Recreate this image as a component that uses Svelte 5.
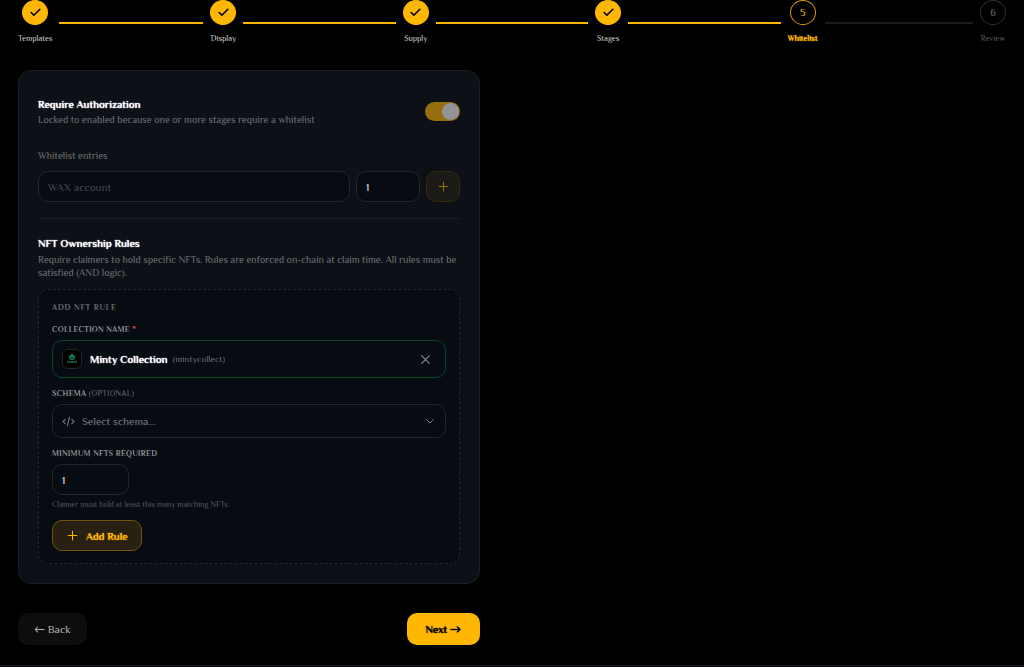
<script>
    const steps = ['Templates', 'Display', 'Supply', 'Stages', 'Whitelist', 'Review'];
    const current = 4;

    let authorized = true;
    let account = '';
    let amount = 1;
    let collection = { name: 'Minty Collection', id: 'mintycollect' };
    let schema = '';
    let minimum = 1;
</script>

<div class="page">
    <ol class="stepper">
        {#each steps as step, i}
            <li class:done={i < current} class:active={i === current}>
                <div class="step">
                    <span class="circle">
                        {#if i < current}
                            <svg width="13" height="13" viewBox="0 0 24 24" aria-hidden="true">
                                <path d="M20 6 9 17l-5-5" />
                            </svg>
                        {:else}
                            {i + 1}
                        {/if}
                    </span>
                    <span class="step-label">{step}</span>
                </div>
                {#if i < steps.length - 1}
                    <span class="line"></span>
                {/if}
            </li>
        {/each}
    </ol>

    <div class="columns">
        <main>
            <section class="card">
                <div class="auth">
                    <label for="auth">
                        <span class="title">Require Authorization</span>
                        <span class="subtitle">Locked to enabled because one or more stages require a whitelist</span>
                    </label>
                    <input id="auth" class="toggle" type="checkbox" bind:checked={authorized} disabled />
                </div>

                <label class="entries-label" for="account">Whitelist entries</label>
                <div class="entries">
                    <input id="account" class="field account" type="text" placeholder="WAX account" bind:value={account} />
                    <input class="field amount" type="number" min="1" aria-label="Amount" bind:value={amount} />
                    <button class="add-entry" type="button" aria-label="Add entry" disabled>
                        <svg width="13" height="13" viewBox="0 0 24 24" aria-hidden="true"><path d="M12 4v16M4 12h16" /></svg>
                    </button>
                </div>

                <div class="rules">
                    <h2 class="title">NFT Ownership Rules</h2>
                    <p class="desc">Require claimers to hold specific NFTs. Rules are enforced on-chain at claim time. All rules must be satisfied (AND logic).</p>

                    <div class="rule-form">
                        <h3>ADD NFT RULE</h3>

                        <div class="group">
                            <span class="caption">COLLECTION NAME <b>*</b></span>
                            <div class="box collection">
                                <span class="logo">
                                    <svg width="12" height="12" viewBox="0 0 24 24" aria-hidden="true">
                                        <path class="leaf" d="M12 2l5 3 1 5-3 4H9l-3-4 1-5z" />
                                        <path class="vein" d="M8 5l4 3 4-3M12 8v5M8 10l4 2 4-2" />
                                        <path class="word" d="M2 18h3M6 18h3M10 18h4M15 18h3M19 18h3" />
                                    </svg>
                                </span>
                                <span class="name">{collection.name}</span>
                                <span class="id">({collection.id})</span>
                                <button class="clear" type="button" aria-label="Clear collection">
                                    <svg width="13" height="13" viewBox="0 0 24 24" aria-hidden="true"><path d="M19 5 5 19M5 5l14 14" /></svg>
                                </button>
                            </div>
                        </div>

                        <div class="group">
                            <label class="caption" for="schema">SCHEMA <i>(OPTIONAL)</i></label>
                            <div class="box schema">
                                <svg width="13" height="13" viewBox="0 0 24 24" aria-hidden="true">
                                    <path d="M6 8l-4 4 4 4M18 8l4 4-4 4M14 4l-4 16" />
                                </svg>
                                <select id="schema" bind:value={schema}>
                                    <option value="">Select schema...</option>
                                </select>
                                <svg width="12" height="12" viewBox="0 0 24 24" aria-hidden="true"><path d="M5 9l7 7 7-7" /></svg>
                            </div>
                        </div>

                        <div class="group">
                            <label class="caption" for="minimum">MINIMUM NFTS REQUIRED</label>
                            <input id="minimum" class="field minimum" type="number" min="1" bind:value={minimum} />
                            <p class="hint">Claimer must hold at least this many matching NFTs</p>
                        </div>

                        <button class="add-rule" type="button">
                            <svg width="13" height="13" viewBox="0 0 24 24" aria-hidden="true"><path d="M12 4v16M4 12h16" /></svg>
                            Add Rule
                        </button>
                    </div>
                </div>
            </section>

            <nav class="actions">
                <button class="back" type="button">← Back</button>
                <button class="next" type="button">Next →</button>
            </nav>
        </main>
    </div>
</div>
<footer></footer>

<style>
    :global(body) {
        margin: 0;
        background: #000;
        overflow: hidden;
    }

    .page, .page input, .page button, .page select {
        box-sizing: border-box;
        font-family: Philosopher, Lato, "Liberation Sans", sans-serif;
    }

    .page {
        padding: 0 18px 20px;
        color: #fff;
        font-size: 11px;
    }

    svg {
        display: block;
        flex: none;
        fill: none;
        stroke: currentColor;
        stroke-width: 2;
        stroke-linecap: round;
        stroke-linejoin: round;
    }

    h2, h3, p {
        margin: 0;
    }

    button {
        cursor: pointer;
    }

    /* regular cut, thickened */
    .title, .name, .add-rule, .next, .active .step-label {
        font-weight: 400;
        text-shadow: 0 0 1px currentColor, 0 0 1px currentColor;
    }

    /* stepper */
    .stepper {
        display: flex;
        list-style: none;
        margin: 0;
        padding: 0;
    }

    .stepper li {
        display: flex;
        align-items: center;
        flex: 1;
        color: #5a5a5a;
    }

    .stepper li:last-child {
        flex: none;
    }

    .step {
        display: flex;
        flex-direction: column;
        align-items: center;
        gap: 8px;
    }

    .circle {
        display: flex;
        align-items: center;
        justify-content: center;
        box-sizing: border-box;
        width: 26px;
        height: 25px;
        border: 1px solid #2f2f2f;
        border-radius: 50%;
        font-size: 10px;
        font-weight: 700;
    }

    .circle svg {
        stroke-width: 3;
    }

    .step-label {
        font-size: 8px;
        line-height: 12px;
    }

    .line {
        flex: 1;
        height: 2px;
        margin: 0 7px;
        background: #1c1c1c;
    }

    .done .circle {
        border-color: #ffb703;
        background: #ffb703;
        color: #000;
    }

    .done .step-label {
        color: #d0d0d0;
    }

    .done .line {
        background: #ffb703;
    }

    .active .circle {
        border-color: #d99c06;
        color: #d99c06;
    }

    .active .step-label {
        color: #ffb703;
    }

    /* card */
    .columns {
        display: grid;
        grid-template-columns: 1fr 1fr;
        gap: 64px;
        margin-top: 25px;
    }

    .card {
        padding: 19px;
        border: 1px solid #1a1e24;
        border-radius: 13px;
        background: #0d1117;
    }

    .auth {
        display: flex;
        align-items: center;
        justify-content: space-between;
        padding: 6px 0 22px;
    }

    .auth .title, .auth .subtitle {
        display: block;
    }

    .title {
        font-size: 11px;
        line-height: 16px;
    }

    .subtitle {
        color: #6d7074;
        font-size: 10px;
        line-height: 15px;
    }

    .toggle {
        appearance: none;
        display: flex;
        align-items: center;
        justify-content: flex-end;
        width: 35px;
        height: 19px;
        margin: 0;
        padding: 1px;
        border-radius: 10px;
        background: #966e0d;
    }

    .toggle::before {
        content: '';
        width: 17px;
        height: 17px;
        border-radius: 50%;
        background: #929498;
    }

    .entries-label {
        display: block;
        color: #6d7074;
        font-size: 10px;
        line-height: 13px;
    }

    .entries {
        display: flex;
        gap: 6px;
        margin-top: 9px;
    }

    .field {
        height: 31px;
        padding: 0 9px;
        border: 1px solid #22262d;
        border-radius: 10px;
        outline: none;
        background: #070b12;
        color: #f0f0f0;
        font-size: 11px;
        appearance: textfield;
    }

    .field::placeholder {
        color: #474a4e;
        opacity: 1;
    }

    .field::-webkit-inner-spin-button {
        appearance: none;
    }

    .account {
        flex: 1;
        min-width: 0;
    }

    .amount {
        width: 64px;
    }

    .add-entry {
        display: flex;
        align-items: center;
        justify-content: center;
        width: 34px;
        padding: 0;
        border: 1px solid #33290f;
        border-radius: 10px;
        background: #1c1a16;
        color: #966e0d;
    }

    .rules {
        margin-top: 16px;
        padding-top: 16px;
        border-top: 1px solid #1b1f25;
    }

    .desc {
        margin: 2px 0 10px;
        color: #6d7074;
        font-size: 10px;
        line-height: 13px;
    }

    .rule-form {
        display: flex;
        flex-direction: column;
        gap: 10px;
        padding: 12px 13px;
        border: 1px dashed #23272d;
        border-radius: 10px;
        background: #070b12;
    }

    h3 {
        color: #6d7074;
        font-size: 8px;
        font-weight: 700;
        line-height: 12px;
        letter-spacing: 0.1em;
    }

    .group {
        display: flex;
        flex-direction: column;
    }

    .caption {
        margin-bottom: 4px;
        color: #94969a;
        font-size: 8px;
        font-weight: 700;
        line-height: 12px;
        letter-spacing: 0.04em;
    }

    .caption b {
        color: #f8484f;
    }

    .caption i {
        color: #6d7074;
        font-style: normal;
        font-weight: 400;
    }

    .box {
        display: flex;
        align-items: center;
        box-sizing: border-box;
        border: 1px solid #22262d;
        border-radius: 10px;
    }

    .collection {
        height: 38px;
        padding: 0 13px 0 9px;
        border-color: #074527;
    }

    .logo {
        display: flex;
        align-items: center;
        justify-content: center;
        box-sizing: border-box;
        width: 20px;
        height: 20px;
        margin-right: 8px;
        border: 1px solid #23262a;
        border-radius: 6px;
        background: #000;
    }

    .leaf {
        fill: #1f9d7c;
        stroke: none;
    }

    .vein {
        stroke: #06372b;
    }

    .word {
        stroke: #1a8067;
        stroke-width: 3;
        stroke-linecap: butt;
    }

    .name {
        font-size: 11px;
    }

    .id {
        margin-left: 5px;
        color: #6d7074;
        font-size: 9px;
    }

    .clear {
        margin-left: auto;
        padding: 0;
        border: 0;
        background: none;
        color: #8b8d91;
    }

    .schema {
        height: 34px;
        padding: 0 9px;
        color: #77797d;
    }

    .schema select {
        flex: 1;
        min-width: 0;
        height: 100%;
        padding: 0 7px;
        border: 0;
        outline: none;
        appearance: none;
        background: #070b12;
        color: #77797d;
        font-size: 11px;
    }

    .minimum {
        width: 77px;
    }

    .hint {
        margin-top: 4px;
        color: #55585c;
        font-size: 8px;
        line-height: 11px;
    }

    .add-rule {
        display: flex;
        align-items: center;
        align-self: flex-start;
        gap: 7px;
        height: 31px;
        padding: 0 13px;
        border: 1px solid #72530d;
        border-radius: 10px;
        background: #272013;
        color: #ffb703;
        font-size: 11px;
    }

    /* bottom buttons */
    .actions {
        display: flex;
        justify-content: space-between;
        margin-top: 29px;
    }

    .back, .next {
        height: 32px;
        border: 0;
        border-radius: 10px;
        font-size: 11px;
    }

    .back {
        padding: 0 16px 2px;
        background: #0d0d0d;
        color: #b3b3b3;
    }

    .next {
        padding: 0 19px 2px;
        background: #ffb703;
        color: #000;
    }

    footer {
        height: 8px;
        border-top: 1px solid #1b1e22;
        background: #05070a;
    }
</style>
